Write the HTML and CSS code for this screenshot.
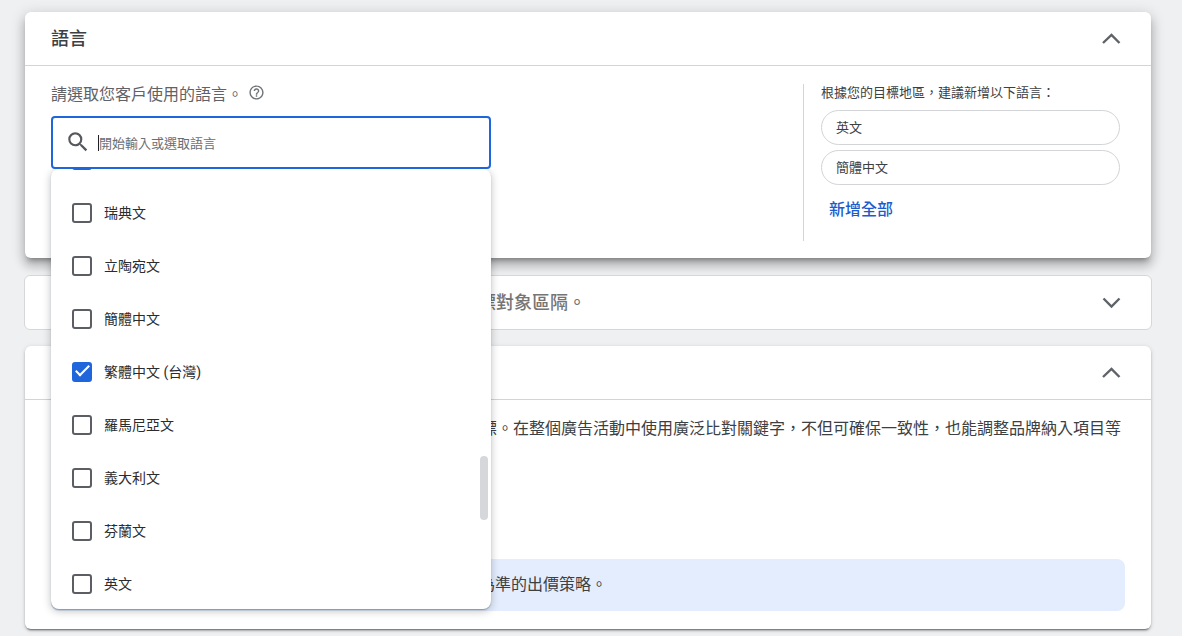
FILE: index.html
```html
<!DOCTYPE html>
<html lang="zh-Hant">
<head>
<meta charset="utf-8">
<title>語言</title>
<link rel="stylesheet" href="styles.css">
</head>
<body>
<main class="page">
  <section class="card card-active">
    <header class="card-header">
      <h2 class="card-title">語言</h2>
      <button class="toggle" type="button" aria-label="收合語言" aria-expanded="true">
        <svg class="chevron" viewBox="0 0 20 12"><path d="M2 10 10.5 2l8 8"/></svg>
      </button>
    </header>
    <div class="language-body">
      <div class="language-main">
        <div class="prompt">
          <label for="language-input">請選取您客戶使用的語言。</label>
          <button class="help" type="button" aria-label="說明">
            <svg viewBox="0 0 24 24"><path d="M11 18h2v-2h-2v2zm1-16C6.48 2 2 6.48 2 12s4.48 10 10 10 10-4.48 10-10S17.52 2 12 2zm0 18c-4.41 0-8-3.59-8-8s3.59-8 8-8 8 3.59 8 8-3.59 8-8 8zm0-14c-2.21 0-4 1.79-4 4h2c0-1.1.9-2 2-2s2 .9 2 2c0 2-3 1.75-3 5h2c0-2.25 3-2.5 3-5 0-2.21-1.79-4-4-4z"/></svg>
          </button>
        </div>
        <div class="combobox">
          <div class="field">
            <svg class="search-icon" viewBox="0 0 24 24"><path d="M15.5 14h-.79l-.28-.27A6.47 6.47 0 0 0 16 9.5 6.5 6.5 0 1 0 9.5 16c1.61 0 3.09-.59 4.23-1.57l.27.28v.79l5 4.99L20.49 19l-4.99-5zm-6 0C7.01 14 5 11.99 5 9.5S7.01 5 9.5 5 14 7.01 14 9.5 11.99 14 9.5 14z"/></svg>
            <span class="caret"></span>
            <input class="field-input" id="language-input" type="text" placeholder="開始輸入或選取語言">
          </div>
          <div class="menu">
            <ul class="options">
              <li><label class="option"><input class="box" type="checkbox" aria-label="其他語言"></label></li>
              <li><label class="option"><input class="box" type="checkbox">瑞典文</label></li>
              <li><label class="option"><input class="box" type="checkbox">立陶宛文</label></li>
              <li><label class="option"><input class="box" type="checkbox">簡體中文</label></li>
              <li><label class="option"><input class="box" type="checkbox" checked>繁體中文 (台灣)</label></li>
              <li><label class="option"><input class="box" type="checkbox">羅馬尼亞文</label></li>
              <li><label class="option"><input class="box" type="checkbox">義大利文</label></li>
              <li><label class="option"><input class="box" type="checkbox">芬蘭文</label></li>
              <li><label class="option"><input class="box" type="checkbox">英文</label></li>
            </ul>
            <span class="thumb"></span>
          </div>
        </div>
      </div>
      <aside class="suggestions">
        <p class="suggestions-title">根據您的目標地區，建議新增以下語言：</p>
        <button class="chip" type="button">英文</button>
        <button class="chip" type="button">簡體中文</button>
        <button class="add-all" type="button">新增全部</button>
      </aside>
    </div>
  </section>

  <section class="card card-closed">
    <header class="card-header">
      <h2 class="card-title card-title-muted">標對象區隔。</h2>
      <button class="toggle" type="button" aria-label="展開目標對象區隔" aria-expanded="false">
        <svg class="chevron" viewBox="0 0 20 12"><path d="M2.5 1.5l8 8 8-8"/></svg>
      </button>
    </header>
  </section>

  <section class="card card-open">
    <header class="card-header">
      <button class="toggle" type="button" aria-label="收合廣泛比對關鍵字" aria-expanded="true">
        <svg class="chevron" viewBox="0 0 20 12"><path d="M2 10 10.5 2l8 8"/></svg>
      </button>
    </header>
    <div class="keyword-body">
      <p class="description">標。在整個廣告活動中使用廣泛比對關鍵字，不但可確保一致性，也能調整品牌納入項目等</p>
      <p class="notice">為準的出價策略。</p>
    </div>
  </section>
</main>
</body>
</html>
```

FILE: styles.css
```css
* {
  box-sizing: border-box;
}

body {
  margin: 0;
  background: #eff0f2;
  color: #3c4043;
  font-family: Roboto, "Noto Sans CJK TC", sans-serif;
  font-size: 16px;
  line-height: 24px;
}

button,
input {
  font: inherit;
  color: inherit;
}

button {
  padding: 0;
  border: 0;
  background: none;
  cursor: pointer;
}

.page {
  display: flex;
  flex-direction: column;
  gap: 16px;
  padding: 12px 31px 6px 25px;
}

.card {
  background: #fff;
  border-radius: 6px;
}

.card-active {
  box-shadow: 0 5px 5px -3px rgba(0, 0, 0, .3), 0 8px 10px 1px rgba(0, 0, 0, .16), 0 3px 14px 2px rgba(0, 0, 0, .14);
}

.card-closed {
  margin: 1px -1px 0;
  border: 1px solid #d5d7da;
}

.card-open {
  box-shadow: 0 3px 1px -2px rgba(0, 0, 0, .3), 0 2px 2px 0 rgba(0, 0, 0, .2), 0 1px 5px 0 rgba(0, 0, 0, .14);
}

.card-header {
  display: flex;
  align-items: center;
  justify-content: space-between;
  height: 54px;
  padding: 0 30px 0 26px;
  border-bottom: 1px solid #d2d4d7;
}

.card-closed .card-header {
  height: 53px;
  padding-left: 453px;
  border-bottom: 0;
}

.card-open .card-header {
  justify-content: flex-end;
}

.card-title {
  margin: 0;
  font-size: 18px;
  font-weight: 500;
  white-space: nowrap;
}

.card-title-muted {
  color: #757575;
}

.toggle {
  display: flex;
}

.chevron {
  width: 20px;
  height: 12px;
  fill: none;
  stroke: #5f6368;
  stroke-width: 2.4;
}

.language-body {
  display: flex;
  justify-content: space-between;
  padding: 18px 31px 17px 26px;
}

.language-main {
  width: 440px;
}

.prompt {
  display: flex;
  align-items: flex-start;
  gap: 5px;
  margin-bottom: 10px;
  color: #5f6368;
  line-height: 22px;
}

.help {
  display: flex;
}

.help svg {
  width: 17px;
  height: 17px;
  fill: #6f7377;
}

.combobox {
  position: relative;
  z-index: 10;
}

.field {
  display: flex;
  align-items: center;
  height: 53px;
  padding: 0 12px;
  border: 2px solid #1f66dd;
  border-radius: 4px;
  background: #fff;
}

.search-icon {
  width: 26px;
  height: 26px;
  margin: 0 7px 2px 0;
  fill: #55585c;
}

.caret {
  width: 1px;
  height: 16px;
  background: #202124;
}

.field-input {
  flex: 1;
  min-width: 0;
  padding: 2px 0 0;
  border: 0;
  outline: 0;
  background: none;
  font-size: 13px;
}

.field-input::placeholder {
  color: #6a6e73;
  opacity: 1;
}

.menu {
  position: absolute;
  top: 100%;
  left: 0;
  width: 100%;
  border-radius: 8px;
  background: #fff;
  box-shadow: 0 1px 1px rgba(60, 80, 110, .4), 0 2px 8px rgba(0, 0, 0, .25);
  clip-path: inset(0 -16px -16px -16px);
}

.options {
  display: flex;
  flex-direction: column;
  justify-content: flex-end;
  height: 440px;
  margin: 0;
  padding: 0;
  overflow: hidden;
  list-style: none;
}

.options li:last-child {
  margin-bottom: -1px;
}

.option {
  display: flex;
  align-items: center;
  gap: 12px;
  height: 53px;
  padding-left: 21px;
  color: #2b2c2e;
  font-size: 14px;
}

.box {
  display: flex;
  justify-content: center;
  width: 20px;
  height: 20px;
  margin: 0;
  border: 2px solid #5b5e63;
  border-radius: 3px;
  background: #fff;
  appearance: none;
}

.box:checked {
  border-color: #1f66dd;
  background: #1f66dd;
}

.box:checked::before {
  width: 5px;
  height: 12px;
  margin-top: -2px;
  border: solid #fff;
  border-width: 0 2px 2px 0;
  content: "";
  transform: rotate(45deg);
}

.thumb {
  position: absolute;
  top: 287px;
  right: 3px;
  width: 8px;
  height: 64px;
  border-radius: 4px;
  background: #d6d7db;
}

.suggestions {
  display: flex;
  flex-direction: column;
  width: 317px;
  min-height: 157px;
  padding-left: 17px;
  border-left: 1px solid #d2d4d7;
}

.suggestions-title {
  margin: 0 0 8px;
  font-size: 13px;
  line-height: 18px;
}

.chip {
  height: 35px;
  margin-bottom: 5px;
  padding: 0 14px;
  border: 1px solid #d2d4d7;
  border-radius: 18px;
  font-size: 13px;
  line-height: 20px;
  text-align: left;
}

.add-all {
  align-self: flex-start;
  margin: 8px;
  color: #1a5ccc;
  font-weight: 500;
}

.keyword-body {
  padding: 17px 26px 18px;
}

.description {
  min-height: 127px;
  margin: 0 0 15px;
  padding-left: 430px;
}

.notice {
  margin: 0;
  padding: 14px 12px 14px 428px;
  border-radius: 8px;
  background: #e3edfd;
}
```
